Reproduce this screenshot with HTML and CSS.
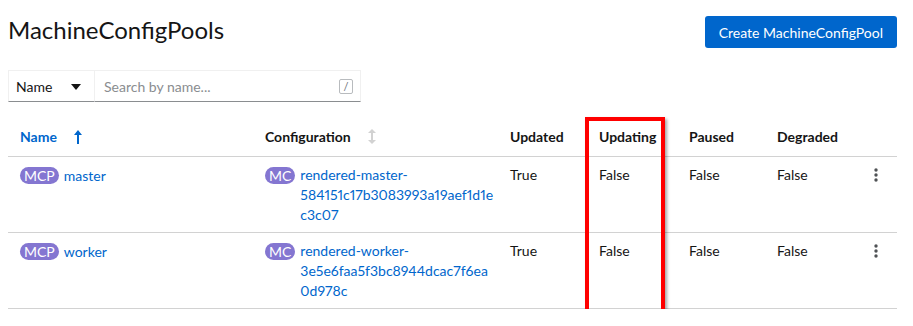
FILE: index.html
```html
<!DOCTYPE html>
<html lang="en">
<head>
<meta charset="utf-8">
<title>MachineConfigPools</title>
<link rel="stylesheet" href="styles.css">
</head>
<body>
<div class="page">
  <div class="head">
    <h1 class="title">MachineConfigPools</h1>
    <button class="btn" type="button">Create MachineConfigPool</button>
  </div>
  <div class="filter">
    <div class="select">
      <span>Name</span>
      <svg class="caret" width="10" height="6" viewBox="0 0 10 6"><path d="M0 0h10L5 6z" fill="#151515"/></svg>
    </div>
    <div class="search">
      <span class="placeholder">Search by name...</span>
      <span class="key">/</span>
    </div>
  </div>
  <div class="tablewrap">
    <table class="grid">
      <colgroup>
        <col class="c-name"><col class="c-conf"><col class="c-upd"><col class="c-upg"><col class="c-pau"><col class="c-deg"><col class="c-kebab">
      </colgroup>
      <thead>
        <tr>
          <th class="sorted"><span>Name</span>
            <svg class="sort" width="8" height="14" viewBox="0 0 8 14"><path d="M4 0L0 5h3v9h2V5h3z" fill="#0066cc"/></svg>
          </th>
          <th><span>Configuration</span>
            <svg class="sort" width="8" height="15" viewBox="0 0 8 15"><path d="M4 0L0 4h3v7H0l4 4 4-4H5V4h3z" fill="#d2d2d2"/></svg>
          </th>
          <th>Updated</th>
          <th>Updating</th>
          <th>Paused</th>
          <th>Degraded</th>
          <th></th>
        </tr>
      </thead>
      <tbody>
        <tr>
          <td><span class="badge">MCP</span><a class="link" href="#">master</a></td>
          <td><div class="conf"><span class="badge">MC</span><a class="link" href="#">rendered-master-<br>584151c17b3083993a19aef1d1e<br>c3c07</a></div></td>
          <td>True</td>
          <td>False</td>
          <td>False</td>
          <td>False</td>
          <td class="kebab-cell"><svg class="kebab" width="4" height="14" viewBox="0 0 4 14"><circle cx="2" cy="2" r="1.7" fill="#4f5255"/><circle cx="2" cy="7" r="1.7" fill="#4f5255"/><circle cx="2" cy="12" r="1.7" fill="#4f5255"/></svg></td>
        </tr>
        <tr>
          <td><span class="badge">MCP</span><a class="link" href="#">worker</a></td>
          <td><div class="conf"><span class="badge">MC</span><a class="link" href="#">rendered-worker-<br>3e5e6faa5f3bc8944dcac7f6ea<br>0d978c</a></div></td>
          <td>True</td>
          <td>False</td>
          <td>False</td>
          <td>False</td>
          <td class="kebab-cell"><svg class="kebab" width="4" height="14" viewBox="0 0 4 14"><circle cx="2" cy="2" r="1.7" fill="#4f5255"/><circle cx="2" cy="7" r="1.7" fill="#4f5255"/><circle cx="2" cy="12" r="1.7" fill="#4f5255"/></svg></td>
        </tr>
      </tbody>
    </table>
    <div class="highlight"></div>
  </div>
</div>
</body>
</html>
```
FILE: styles.css
```css
* { box-sizing: border-box; }
html, body { margin: 0; background: #fff; }
body {
  font-family: "Lato", "Open Sans", sans-serif;
  font-size: 14px;
  color: #151515;
  font-variant-numeric: proportional-nums;
}
.page { padding: 16px 16px 0 8px; }
.head {
  display: flex;
  justify-content: space-between;
  align-items: center;
  height: 32px;
}
.title {
  margin: 0;
  font-size: 24px;
  font-weight: 400;
  line-height: 28px;
  margin-top: -4px;
}
.btn {
  height: 32px;
  padding: 0 14px;
  background: #0066cc;
  color: #fff;
  border: 0;
  border-radius: 3px;
  font-family: inherit;
  font-size: 14px;
}
.filter {
  display: flex;
  margin-top: 22px;
  width: 353px;
  height: 32px;
}
.select, .search {
  display: flex;
  align-items: center;
  border: 1px solid #f0f0f0;
  border-bottom-color: #8a8d90;
}
.select {
  width: 86px;
  padding: 0 0 0 7px;
  gap: 19px;
  border-right: 0;
}
.caret { margin-top: 1px; }
.search {
  flex: 1;
  justify-content: space-between;
  padding: 0 7px 0 9px;
}
.placeholder { color: #8a8d90; }
.key {
  width: 14px;
  height: 15px;
  border: 1px solid #b8bbbe;
  border-radius: 2px;
  font-size: 11px;
  line-height: 13px;
  text-align: center;
  color: #6a6e73;
}
.tablewrap {
  position: relative;
  margin-top: 16px;
}
.grid {
  width: 889px;
  border-collapse: collapse;
  table-layout: fixed;
}
.c-name { width: 245px; }
.c-conf { width: 245px; }
.c-upd { width: 89px; }
.c-upg { width: 90px; }
.c-pau { width: 88px; }
.c-deg { width: 85px; }
.c-kebab { width: 47px; }
th {
  text-align: left;
  font-weight: 700;
  padding: 9px 12px;
  line-height: 20px;
  border-bottom: 1px solid #d2d2d2;
  white-space: nowrap;
}
th.sorted { color: #0066cc; }
.sort { vertical-align: -2px; margin-left: 14px; }
td {
  vertical-align: top;
  padding: 8px 12px 7px;
  line-height: 20px;
  border-bottom: 1px solid #d2d2d2;
}
.conf { display: flex; align-items: flex-start; }
.badge {
  display: inline-block;
  background: #8476d1;
  color: #fff;
  border-radius: 9px;
  padding: 0 4px;
  height: 17px;
  line-height: 17px;
  margin-top: 2px;
  margin-right: 5px;
  flex: none;
}
.link { color: #0066cc; text-decoration: none; }
.kebab-cell { text-align: right; padding-right: 19px; }
.kebab { margin-top: 3px; }
.highlight {
  position: absolute;
  left: 577px;
  top: -1px;
  width: 80px;
  height: 201px;
  border: 4px solid #f00;
  box-shadow: 2px 2px 3px rgba(0, 0, 0, 0.35);
  pointer-events: none;
}
```
